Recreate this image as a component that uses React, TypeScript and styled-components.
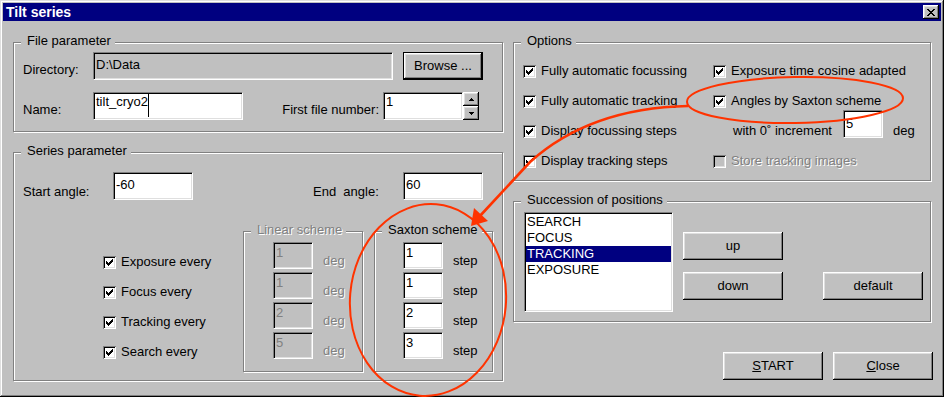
import React from "react";
import styled, { createGlobalStyle, css } from "styled-components";

const GlobalStyle = createGlobalStyle`
  html, body {
    margin: 0;
    padding: 0;
    background: #c0c0c0;
  }
  body {
    font-family: "Liberation Sans", Arial, sans-serif;
    font-size: 13px;
    color: #000;
  }
  * {
    box-sizing: border-box;
  }
`;

const disabledText = css`
  color: #808080;
  text-shadow: 1px 1px 0 #fff;
`;

const raised = css`
  background: #c0c0c0;
  box-shadow: inset -1px -1px #000, inset 1px 1px #fff, inset -2px -2px #808080,
    inset 2px 2px #dfdfdf;
`;

const sunken = css`
  border: 1px solid;
  border-color: #808080 #fff #fff #808080;
  box-shadow: inset 1px 1px #000, inset -1px -1px #dfdfdf;
`;

// window frame
const Window = styled.div`
  position: relative;
  width: 944px;
  height: 397px;
  padding: 3px;
  background: #c0c0c0;
  box-shadow: inset -1px -1px #000, inset 1px 1px #dfdfdf, inset -2px -2px #808080,
    inset 2px 2px #fff;
  overflow: hidden;
`;

const TitleBar = styled.div`
  display: flex;
  align-items: flex-start;
  justify-content: space-between;
  height: 18px;
  padding: 0 2px 0 3px;
  background: #000080;
  color: #fff;
  font-size: 14px;
  font-weight: bold;
  line-height: 18px;
`;

const TitleButton = styled.div`
  ${raised};
  display: flex;
  align-items: center;
  justify-content: center;
  width: 16px;
  height: 14px;
  margin-top: 2px;
  padding: 1px 0 0 0;
`;

const Body = styled.div`
  display: flex;
  gap: 10px;
  padding: 21px 0 0 10px;
`;

const Column = styled.div<{ $w: number; $gap: number }>`
  display: flex;
  flex-direction: column;
  width: ${(p) => p.$w}px;
  gap: ${(p) => p.$gap}px;
`;

const GroupBox = styled.div<{ $w?: number; $h: number; $pad: string }>`
  position: relative;
  flex-shrink: 0;
  width: ${(p) => (p.$w ? `${p.$w}px` : "100%")};
  height: ${(p) => p.$h}px;
  padding: ${(p) => p.$pad};
  border: 1px solid #808080;
  box-shadow: inset 1px 1px #fff, 1px 1px #fff;
`;

const Caption = styled.span<{ $disabled?: boolean }>`
  position: absolute;
  top: -10px;
  left: 7px;
  padding: 0 4px 0 6px;
  line-height: 16px;
  background: #c0c0c0;
  white-space: nowrap;
  ${(p) => p.$disabled && disabledText};
`;

const Row = styled.div<{ $mt?: number; $ml?: number; $gap?: number }>`
  display: flex;
  align-items: flex-start;
  margin-top: ${(p) => p.$mt || 0}px;
  margin-left: ${(p) => p.$ml || 0}px;
  gap: ${(p) => p.$gap || 0}px;
`;

const Label = styled.span<{
  $w?: number;
  $pt?: number;
  $ml?: number;
  $pr?: number;
  $right?: boolean;
  $disabled?: boolean;
}>`
  display: block;
  flex-shrink: 0;
  width: ${(p) => (p.$w ? `${p.$w}px` : "auto")};
  padding-top: ${(p) => p.$pt || 0}px;
  padding-right: ${(p) => p.$pr || 0}px;
  margin-left: ${(p) => p.$ml || 0}px;
  text-align: ${(p) => (p.$right ? "right" : "left")};
  line-height: 16px;
  white-space: pre;
  ${(p) => p.$disabled && disabledText};
`;

const Field = styled.div<{
  $w: number;
  $h?: number;
  $pt?: number;
  $grey?: boolean;
  $disabled?: boolean;
}>`
  ${sunken};
  flex-shrink: 0;
  width: ${(p) => p.$w}px;
  height: ${(p) => p.$h || 28}px;
  padding: ${(p) => p.$pt || 0}px 1px 0 2px;
  background: ${(p) => (p.$grey || p.$disabled ? "#c0c0c0" : "#fff")};
  line-height: 16px;
  white-space: nowrap;
  overflow: hidden;
  ${(p) => p.$disabled && "color: #808080;"};
`;

// the small increment field sits a little above its text line
const IncrementField = styled(Field)`
  align-self: flex-start;
  margin-top: -13px;
`;

const Caret = styled.span`
  display: inline-block;
  width: 1px;
  height: 24px;
  margin: -1px 0 -7px 0;
  vertical-align: top;
  background: #000;
`;

const Button = styled.button<{ $w?: number; $h?: number; $default?: boolean }>`
  ${raised};
  display: flex;
  align-items: center;
  justify-content: center;
  flex-shrink: 0;
  width: ${(p) => p.$w || 100}px;
  height: ${(p) => p.$h || 28}px;
  margin: 0;
  padding: 0 0 1px 0;
  border: ${(p) => (p.$default ? "1px solid #000" : "none")};
  font-family: inherit;
  font-size: 13px;
  font-weight: normal;
  color: #000;
  line-height: 16px;
`;

const SpinBox = styled.div`
  display: flex;
  flex-direction: column;
`;

const SpinButton = styled.div`
  ${raised};
  display: flex;
  align-items: center;
  justify-content: center;
  width: 16px;
  height: 14px;
`;

const CheckRow = styled.div`
  display: flex;
  align-items: center;
  gap: 5px;
  height: 16px;
`;

const Box = styled.span<{ $disabled?: boolean }>`
  display: block;
  flex-shrink: 0;
  width: 13px;
  height: 13px;
  background: ${(p) => (p.$disabled ? "#c0c0c0" : "#fff")};
  box-shadow: inset 1px 1px #808080, inset -1px -1px #fff, inset 2px 2px #000,
    inset -2px -2px #dfdfdf;
`;

const OptionsGrid = styled.div`
  display: grid;
  grid-template-columns: 190px auto;
  grid-auto-rows: 16px;
  row-gap: 14px;
`;

const LowerArea = styled.div`
  display: flex;
  margin: 31px 0 0 80px;
`;

const CheckColumn = styled.div`
  display: flex;
  flex-direction: column;
  gap: 14px;
  width: 140px;
  padding-top: 23px;
`;

const SchemeRows = styled.div`
  display: flex;
  flex-direction: column;
  gap: 3px;
`;

const SchemeRow = styled.div`
  display: flex;
  align-items: flex-end;
  height: 27px;
`;

const ListBox = styled.div`
  ${sunken};
  flex-shrink: 0;
  width: 149px;
  height: 100px;
  padding: 1px;
  background: #fff;
`;

const ListItem = styled.div<{ $selected?: boolean }>`
  height: 16px;
  padding-left: 1px;
  line-height: 16px;
  background: ${(p) => (p.$selected ? "#000080" : "transparent")};
  color: ${(p) => (p.$selected ? "#fff" : "#000")};
`;

const ButtonGrid = styled.div`
  display: grid;
  grid-template-columns: 100px 100px;
  grid-template-rows: 28px 28px;
  column-gap: 40px;
  row-gap: 12px;
  margin: 20px 0 0 10px;
`;

const Footer = styled.div`
  display: flex;
  justify-content: flex-end;
  gap: 10px;
  width: 420px;
  margin-top: 10px;
`;

const Overlay = styled.svg`
  position: absolute;
  left: 0;
  top: 0;
  pointer-events: none;
`;

const RED = "#ff3300";

function Check({ checked = true, disabled = false }: { checked?: boolean; disabled?: boolean }) {
  return (
    <Box $disabled={disabled}>
      {checked && (
        <svg width="13" height="13" viewBox="0 0 13 13" shapeRendering="crispEdges">
          <path
            fill="#000"
            d="M9 3h1v1H9z M8 4h2v1H8z M3 5h1v1H3z M7 5h3v1H7z M3 6h2v1H3z M6 6h3v1H6z M3 7h5v1H3z M4 8h3v1H4z M5 9h1v1H5z"
          />
        </svg>
      )}
    </Box>
  );
}

function Option({ label, checked = true, disabled = false }: { label: string; checked?: boolean; disabled?: boolean }) {
  return (
    <CheckRow>
      <Check checked={checked} disabled={disabled} />
      <Label $disabled={disabled}>{label}</Label>
    </CheckRow>
  );
}

function Arrow({ down }: { down?: boolean }) {
  return (
    <svg width="5" height="3" viewBox="0 0 5 3" shapeRendering="crispEdges">
      <path
        fill="#000"
        d={down ? "M0 0h5v1H0z M1 1h3v1H1z M2 2h1v1H2z" : "M2 0h1v1H2z M1 1h3v1H1z M0 2h5v1H0z"}
      />
    </svg>
  );
}

const linear = ["1", "1", "2", "5"];
const saxton = ["1", "1", "2", "3"];
const everyLabels = ["Exposure every", "Focus every", "Tracking every", "Search every"];
const positions = ["SEARCH", "FOCUS", "TRACKING", "EXPOSURE"];

export default function App() {
  return (
    <>
      <GlobalStyle />
      <Window>
        <TitleBar>
          <span>Tilt series</span>
          <TitleButton>
            <svg width="8" height="7" viewBox="0 0 8 7" shapeRendering="crispEdges">
              <path
                fill="#000"
                d="M0 0h2v1H0z M6 0h2v1H6z M1 1h2v1H1z M5 1h2v1H5z M2 2h4v1H2z M3 3h2v1H3z M2 4h4v1H2z M1 5h2v1H1z M5 5h2v1H5z M0 6h2v1H0z M6 6h2v1H6z"
              />
            </svg>
          </TitleButton>
        </TitleBar>

        <Body>
          <Column $w={490} $gap={20}>
            <GroupBox $h={90} $pad="9px 0 0 9px">
              <Caption>File parameter</Caption>
              <Row>
                <Label $w={70} $pt={10}>Directory:</Label>
                <Field $w={300} $pt={4} $grey>D:\Data</Field>
                <Row $ml={10}>
                  <Button $w={80} $default>Browse ...</Button>
                </Row>
              </Row>
              <Row $mt={12}>
                <Label $w={70} $pt={10}>Name:</Label>
                <Field $w={150} $pt={1}>
                  tilt_cryo2
                  <Caret />
                </Field>
                <Label $w={140} $pt={10} $pr={4} $right>
                  First file number:
                </Label>
                <Field $w={80} $pt={1}>1</Field>
                <SpinBox>
                  <SpinButton>
                    <Arrow />
                  </SpinButton>
                  <SpinButton>
                    <Arrow down />
                  </SpinButton>
                </SpinBox>
              </Row>
            </GroupBox>

            <GroupBox $h={229} $pad="19px 0 0 9px">
              <Caption>Series parameter</Caption>
              <Row>
                <Label $w={90} $pt={12}>Start angle:</Label>
                <Field $w={80} $pt={4}>-60</Field>
                <Label $w={90} $pt={12} $ml={120}>End  angle:</Label>
                <Field $w={80} $pt={4}>60</Field>
              </Row>
              <LowerArea>
                <CheckColumn>
                  {everyLabels.map((l) => (
                    <Option key={l} label={l} />
                  ))}
                </CheckColumn>
                <GroupBox $w={120} $h={141} $pad="10px 0 0 29px">
                  <Caption $disabled>Linear scheme</Caption>
                  <SchemeRows>
                    {linear.map((v, i) => (
                      <SchemeRow key={i}>
                        <Field $w={40} $h={27} $pt={2} $disabled>
                          {v}
                        </Field>
                        <Label $ml={10} $disabled>deg</Label>
                      </SchemeRow>
                    ))}
                  </SchemeRows>
                </GroupBox>
                <Row $ml={11}>
                  <GroupBox $w={119} $h={141} $pad="10px 0 0 28px">
                    <Caption>Saxton scheme</Caption>
                    <SchemeRows>
                      {saxton.map((v, i) => (
                        <SchemeRow key={i}>
                          <Field $w={40} $h={27} $pt={2}>
                            {v}
                          </Field>
                          <Label $ml={10}>step</Label>
                        </SchemeRow>
                      ))}
                    </SchemeRows>
                  </GroupBox>
                </Row>
              </LowerArea>
            </GroupBox>
          </Column>

          <Column $w={418} $gap={20}>
            <GroupBox $h={139} $pad="20px 0 0 9px">
              <Caption>Options</Caption>
              <OptionsGrid>
                <Option label="Fully automatic focussing" />
                <Option label="Exposure time cosine adapted" />
                <Option label="Fully automatic tracking" />
                <Option label="Angles by Saxton scheme" />
                <Option label="Display focussing steps" />
                <CheckRow>
                  <Label $w={105} $ml={20}>with 0˚ increment</Label>
                  <IncrementField $w={40} $pt={5}>5</IncrementField>
                  <Label $ml={5}>deg</Label>
                </CheckRow>
                <Option label="Display tracking steps" />
                <Option label="Store tracking images" checked={false} disabled />
              </OptionsGrid>
            </GroupBox>

            <GroupBox $h={121} $pad="10px 0 0 10px">
              <Caption>Succession of positions</Caption>
              <Row>
                <ListBox>
                  {positions.map((p) => (
                    <ListItem key={p} $selected={p === "TRACKING"}>
                      {p}
                    </ListItem>
                  ))}
                </ListBox>
                <ButtonGrid>
                  <Button>up</Button>
                  <span />
                  <Button>down</Button>
                  <Button>default</Button>
                </ButtonGrid>
              </Row>
            </GroupBox>

            <Footer>
              <Button>
                <u>S</u>TART
              </Button>
              <Button>
                <u>C</u>lose
              </Button>
            </Footer>
          </Column>
        </Body>

        <Overlay width="944" height="397" viewBox="0 0 944 397">
          <ellipse
            cx="795"
            cy="100"
            rx="108"
            ry="23"
            transform="rotate(-1 795 100)"
            fill="none"
            stroke={RED}
            strokeWidth="2"
          />
          <ellipse
            cx="428"
            cy="300"
            rx="78"
            ry="96"
            transform="rotate(5 428 300)"
            fill="none"
            stroke={RED}
            strokeWidth="2"
          />
          <path d="M688 106 Q590 108 530 162 L479 217" fill="none" stroke={RED} strokeWidth="2.6" />
          <polygon points="471,226 474,208 488,221" fill={RED} />
        </Overlay>
      </Window>
    </>
  );
}
